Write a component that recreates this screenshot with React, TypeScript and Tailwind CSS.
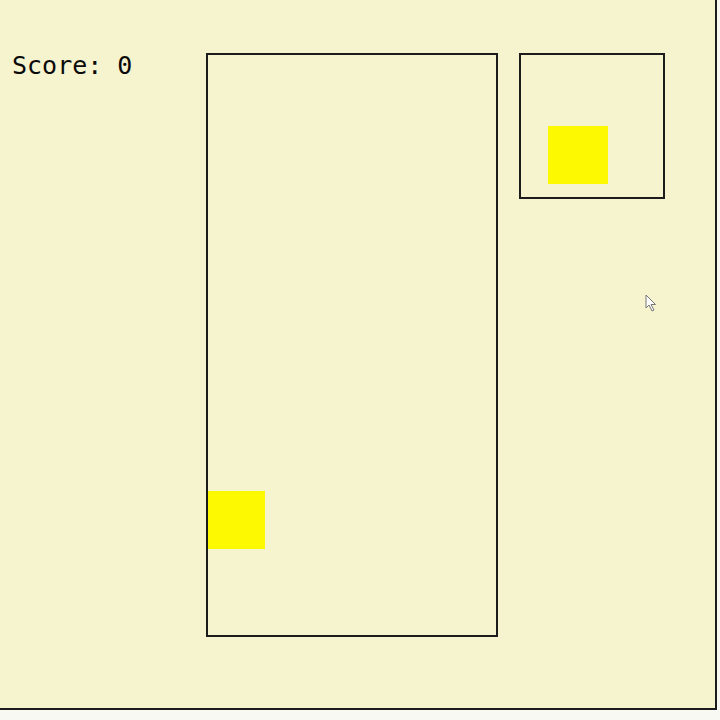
import React from "react";

export default function App() {
  return (
    <div className="w-[720px] h-[720px] bg-[#f9f9f3] relative overflow-hidden">
      <div className="w-[717px] h-[710px] bg-[#f6f3cf] border-r-2 border-b-2 border-[#1c1c1c] flex items-start pt-[53px]">
        <div
          className="w-[206px] pl-[12px] text-[25px] leading-[26px] text-[#0a0a0a]"
          style={{ fontFamily: '"DejaVu Sans Mono", "Liberation Mono", monospace' }}
        >
          Score: 0
        </div>
        <div className="relative w-[292px] h-[584px] border-2 border-[#1c1c1c]">
          <div className="absolute left-0 top-[436px] w-[57px] h-[58px] bg-[#fcf900]" />
        </div>
        <div className="relative ml-[21px] w-[146px] h-[146px] border-2 border-[#1c1c1c]">
          <div className="absolute left-[27px] top-[71px] w-[60px] h-[58px] bg-[#fcf900]" />
        </div>
      </div>
      <svg
        className="absolute left-[645px] top-[294px]"
        width="14"
        height="20"
        viewBox="0 0 14 20"
      >
        <path
          d="M1 1 L1 14 L4 11 L7 17 L9 16 L6 10.5 L10.5 10.5 Z"
          fill="#ffffff"
          stroke="#777"
          strokeWidth="1"
          strokeLinejoin="round"
        />
      </svg>
    </div>
  );
}
